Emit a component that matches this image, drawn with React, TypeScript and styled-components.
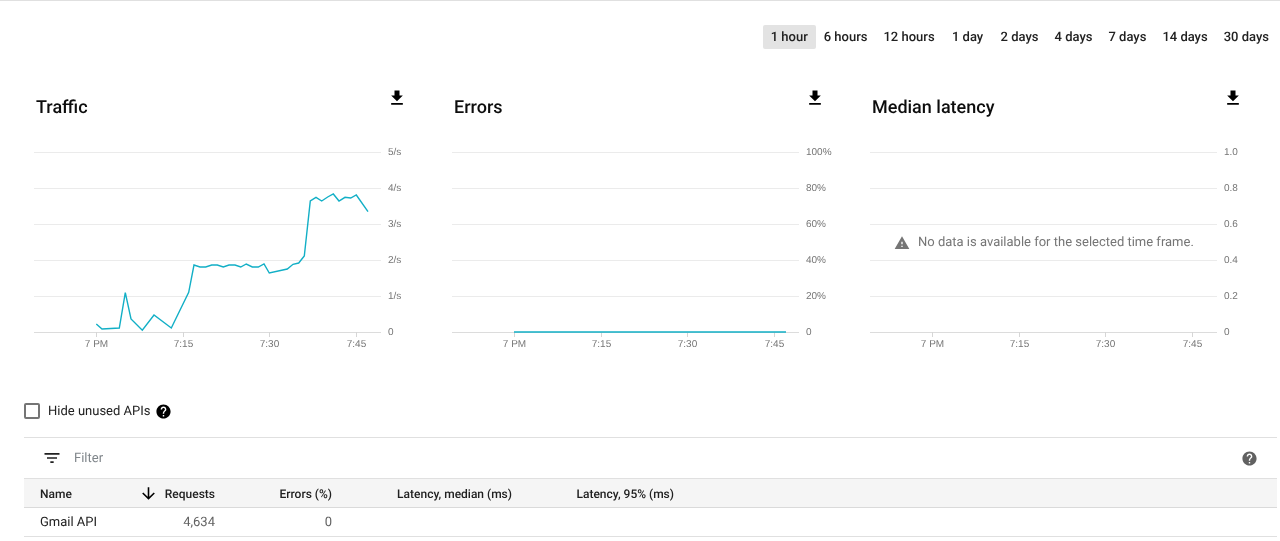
import React from "react";
import styled, { createGlobalStyle } from "styled-components";

const Global = createGlobalStyle`
  html, body { margin: 0; padding: 0; background: #fff; }
  body {
    font-family: Roboto, "Liberation Sans", Arial, sans-serif;
    color: #212121;
    text-rendering: geometricPrecision;
  }
  button { text-rendering: geometricPrecision; }
`;

const Page = styled.div`
  border-top: 1px solid #e0e0e0;
  padding: 24px 3px 0 24px;
  width: 1280px;
  box-sizing: border-box;
  display: flex;
  flex-direction: column;
  will-change: transform;
`;

const RangeBar = styled.div`
  display: flex;
  justify-content: flex-end;
  height: 24px;
`;

const RangeButton = styled.button<{ $active?: boolean }>`
  border: 0;
  border-radius: 2px;
  background: ${(p) => (p.$active ? "#e3e3e3" : "transparent")};
  color: #212121;
  font: 500 13px/22px Roboto, sans-serif;
  padding: 2px 8px 0;
  height: 24px;
  min-width: 50px;
`;

const Charts = styled.div`
  display: flex;
  margin-top: 39px;
`;

const Panel = styled.section`
  width: 418px;
  flex: none;
  position: relative;
`;

const PanelHead = styled.div`
  display: flex;
  justify-content: space-between;
  align-items: flex-start;
  width: 383px;
  height: 52px;
  padding-left: 12px;
  box-sizing: border-box;
`;

const PanelTitle = styled.h2`
  margin: 8px 0 0;
  font: 500 18px/24px Roboto, sans-serif;
  color: #0d0d0d;
`;

const DownloadIcon = styled.svg`
  width: 20px;
  height: 20px;
  fill: #000;
  flex: none;
  margin-top: 0;
`;

const ChartSvg = styled.svg`
  display: block;
  width: 418px;
  height: 220px;
`;

const GridLine = styled.line<{ $axis?: boolean }>`
  stroke: ${(p) => (p.$axis ? "#dcdcdc" : "#ebebeb")};
  stroke-width: 1;
`;

const Tick = styled.line`
  stroke: #d6d6d6;
  stroke-width: 1;
`;

const AxisText = styled.text`
  font: 10px "Liberation Sans", Arial, sans-serif;
  fill: #757575;
`;

const DataLine = styled.polyline`
  fill: none;
  stroke: #12afc6;
  stroke-width: 1.4;
  stroke-linejoin: miter;
`;

const NoData = styled.div`
  position: absolute;
  left: 34px;
  top: 146px;
  display: flex;
  align-items: center;
  gap: 8px;
  font: 400 13px/18px Roboto, sans-serif;
  color: #757575;
  white-space: nowrap;
`;

const WarningIcon = styled.svg`
  width: 16px;
  height: 16px;
  fill: #757575;
  flex: none;
`;

const HideRow = styled.div`
  display: flex;
  align-items: center;
  height: 16px;
  margin-top: 43px;
`;

const Checkbox = styled.span`
  width: 16px;
  height: 16px;
  border: 2px solid #757575;
  border-radius: 2px;
  box-sizing: border-box;
  flex: none;
`;

const HideLabel = styled.label`
  margin-left: 8px;
  padding-top: 2px;
  font: 400 13px/16px Roboto, sans-serif;
  color: #212121;
`;

const HelpIcon = styled.svg<{ $muted?: boolean }>`
  width: 17px;
  height: 17px;
  fill: ${(p) => (p.$muted ? "#616161" : "#000")};
  flex: none;
`;

const InlineHelp = styled.span`
  display: flex;
  margin-left: 5px;
`;

const Table = styled.div`
  margin-top: 18px;
  border-top: 1px solid #e0e0e0;
`;

const FilterRow = styled.div`
  display: flex;
  align-items: center;
  height: 40px;
  padding: 0 19px 0 18px;
`;

const FilterIcon = styled.svg`
  width: 20px;
  height: 20px;
  fill: #212121;
  flex: none;
`;

const FilterText = styled.span`
  margin-left: 12px;
  padding-top: 2px;
  flex: 1;
  font: 400 13px/20px Roboto, sans-serif;
  color: #80868b;
`;

const Row = styled.div<{ $header?: boolean }>`
  display: grid;
  grid-template-columns: 100px 75px 117px 180px 162px 1fr;
  align-items: center;
  height: 29px;
  box-sizing: border-box;
  padding: ${(p) => (p.$header ? "1px" : "2px")} 0 0 16px;
  border-top: 1px solid ${(p) => (p.$header ? "#e0e0e0" : "#dadada")};
  background: ${(p) => (p.$header ? "#f5f5f5" : "#fff")};
  font: ${(p) => (p.$header ? 500 : 400)} 12px/16px Roboto, sans-serif;
  &:last-child { border-bottom: 1px solid #e0e0e0; height: 30px; }
`;

const NameCell = styled.div`
  color: #212121;
`;

const NumCell = styled.div<{ $muted?: boolean }>`
  display: flex;
  justify-content: flex-end;
  align-items: center;
  white-space: nowrap;
  color: ${(p) => (p.$muted ? "#616161" : "#212121")};
  font-size: ${(p) => (p.$muted ? "13px" : "12px")};
`;

const BodyName = styled(NameCell)`
  font-size: 13px;
`;

const SortIcon = styled.svg`
  width: 19px;
  height: 19px;
  fill: #000;
  margin: -1px 7px 0 -17px;
  flex: none;
`;

const ranges = ["1 hour", "6 hours", "12 hours", "1 day", "2 days", "4 days", "7 days", "14 days", "30 days"];
const gridY = [152, 188, 224, 260, 296, 332];
const ticks: [number, string][] = [[96, "7 PM"], [183, "7:15"], [269, "7:30"], [356, "7:45"]];

const trafficPoints =
  "96.3,324 102,329 119.3,328 125.3,292.7 131,319 142.3,330.3 154,315 171.3,328 188.7,292.3 194,265 200,267 205.7,267 211.7,265 217.3,265 223.3,267 229,265 235,265 240.7,267 246.3,264 252.3,267 258.3,267 264,264 269.3,273 287.3,269 293,264.3 298.7,263 304.3,256 310.3,201 316,197.3 321.7,201 327.7,197 333.3,194 339,201 345,197.3 350.7,198 356.3,195 368,211.7";

const DownloadGlyph = () => (
  <DownloadIcon viewBox="0 0 24 24" aria-hidden="true">
    <path d="M19 9h-4V3H9v6H5l7 7 7-7zM5 18v2h14v-2H5z" />
  </DownloadIcon>
);

const helpPath =
  "M12 2C6.48 2 2 6.48 2 12s4.48 10 10 10 10-4.48 10-10S17.52 2 12 2zm1 17h-2v-2h2v2zm2.07-7.75l-.9.92C13.45 12.9 13 13.5 13 15h-2v-.5c0-1.1.45-2.1 1.17-2.83l1.24-1.26c.37-.36.59-.86.59-1.41 0-1.1-.9-2-2-2s-2 .9-2 2H8c0-2.21 1.79-4 4-4s4 1.79 4 4c0 .88-.36 1.68-.93 2.25z";

type ChartProps = { title: string; labels: string[]; points?: string; empty?: boolean };

const Chart = ({ title, labels, points, empty }: ChartProps) => (
  <Panel>
    <PanelHead>
      <PanelTitle>{title}</PanelTitle>
      <DownloadGlyph />
    </PanelHead>
    <ChartSvg viewBox="24 140 418 220">
      {gridY.map((y, i) => (
        <React.Fragment key={y}>
          <GridLine x1={34} x2={381} y1={y + 0.5} y2={y + 0.5} $axis={i === gridY.length - 1} />
          <AxisText x={388} y={y + 3}>{labels[i]}</AxisText>
        </React.Fragment>
      ))}
      {ticks.map(([x, label]) => (
        <React.Fragment key={label}>
          <Tick x1={x + 0.5} x2={x + 0.5} y1={332} y2={337} />
          <AxisText x={x + 0.5} y={347} textAnchor="middle">{label}</AxisText>
        </React.Fragment>
      ))}
      {points && <DataLine points={points} />}
    </ChartSvg>
    {empty && (
      <NoData>
        <WarningIcon viewBox="0 0 24 24" aria-hidden="true">
          <path d="M1 21h22L12 2 1 21zm12-3h-2v-2h2v2zm0-4h-2v-4h2v4z" />
        </WarningIcon>
        No data is available for the selected time frame.
      </NoData>
    )}
  </Panel>
);

export default function App() {
  return (
    <Page>
      <Global />
      <RangeBar>
        {ranges.map((r, i) => (
          <RangeButton key={r} $active={i === 0}>{r}</RangeButton>
        ))}
      </RangeBar>
      <Charts>
        <Chart title="Traffic" labels={["5/s", "4/s", "3/s", "2/s", "1/s", "0"]} points={trafficPoints} />
        <Chart title="Errors" labels={["100%", "80%", "60%", "40%", "20%", "0"]} points="96,332 368,332" />
        <Chart title="Median latency" labels={["1.0", "0.8", "0.6", "0.4", "0.2", "0"]} empty />
      </Charts>
      <HideRow>
        <Checkbox />
        <HideLabel>Hide unused APIs</HideLabel>
        <InlineHelp>
          <HelpIcon viewBox="0 0 24 24" aria-hidden="true"><path d={helpPath} /></HelpIcon>
        </InlineHelp>
      </HideRow>
      <Table>
        <FilterRow>
          <FilterIcon viewBox="0 0 24 24" aria-hidden="true">
            <path d="M10 18h4v-2h-4v2zM3 6v2h18V6H3zm3 7h12v-2H6v2z" />
          </FilterIcon>
          <FilterText>Filter</FilterText>
          <HelpIcon $muted viewBox="0 0 24 24" aria-hidden="true"><path d={helpPath} /></HelpIcon>
        </FilterRow>
        <Row $header>
          <NameCell>Name</NameCell>
          <NumCell>
            <SortIcon viewBox="0 0 24 24" aria-hidden="true">
              <path d="M20 12l-1.41-1.41L13 16.17V4h-2v12.17l-5.58-5.59L4 12l8 8 8-8z" />
            </SortIcon>
            Requests
          </NumCell>
          <NumCell>Errors (%)</NumCell>
          <NumCell>Latency, median (ms)</NumCell>
          <NumCell>Latency, 95% (ms)</NumCell>
          <div />
        </Row>
        <Row>
          <BodyName>Gmail API</BodyName>
          <NumCell $muted>4,634</NumCell>
          <NumCell $muted>0</NumCell>
          <div />
          <div />
          <div />
        </Row>
      </Table>
    </Page>
  );
}
